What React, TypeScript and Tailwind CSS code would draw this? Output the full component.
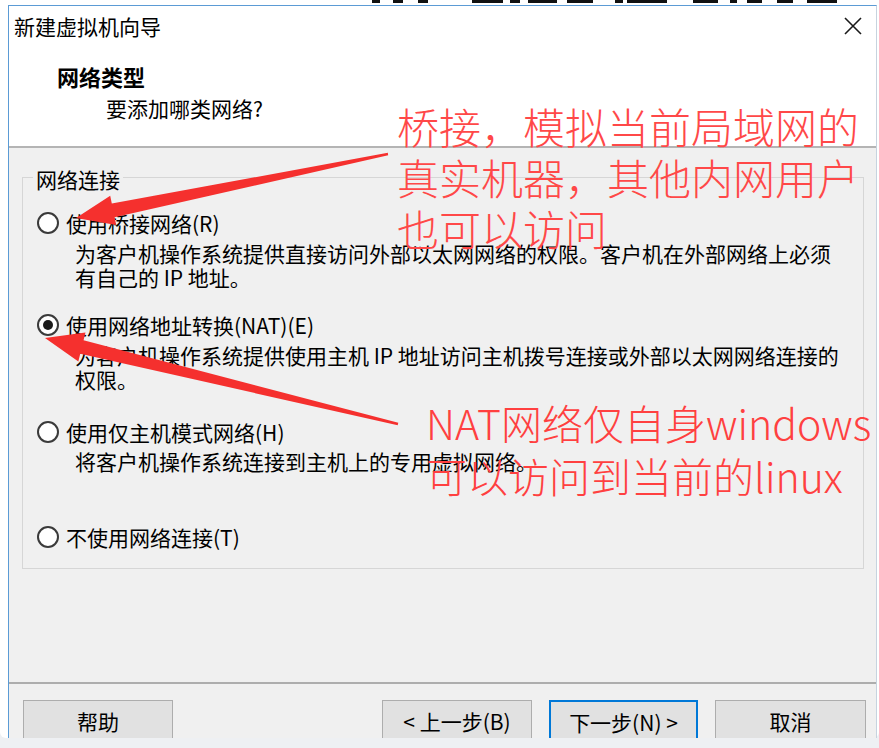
import React from "react";

function Radio({ checked }: { checked?: boolean }) {
  return (
    <span className="w-[22px] h-[22px] rounded-full border-2 border-[#3a3a3a] bg-white flex items-center justify-center shrink-0">
      {checked && <span className="w-[10px] h-[10px] rounded-full bg-[#1a1a1a]" />}
    </span>
  );
}

function Btn({ children, w, ml, primary }: { children: React.ReactNode; w: string; ml: string; primary?: boolean }) {
  return (
    <div
      className={
        "h-[44px] shrink-0 flex justify-center pt-[8px] leading-[24px] bg-[#e1e1e1] " +
        w +
        " " +
        ml +
        " " +
        (primary ? "border-2 border-[#0078d7] pt-[7px]" : "border border-[#adadad]")
      }
    >
      <span className="whitespace-nowrap">{children}</span>
    </div>
  );
}

export default function App() {
  const bars: [number, number][] = [
    [372, 8], [393, 10], [418, 10], [472, 31], [510, 10], [528, 29], [567, 26], [615, 8], [627, 40], [693, 25], [730, 7], [747, 15], [777, 16], [807, 30],
  ];
  return (
    <div className="w-[879px] h-[748px] bg-[#eef0f3] relative overflow-hidden font-['Noto_Sans_CJK_SC',sans-serif] text-[21px] leading-[24px] text-black">
      <div className="h-[738px] bg-white rounded-b-[6px] flex flex-col">
        <svg width="879" height="5" className="block shrink-0">
          {bars.map(([x, w], i) => (
            <rect key={i} x={x} y={0} width={w} height={3} fill="#111" />
          ))}
        </svg>
        <div className="ml-[8px] w-[869px] h-[733px] border-t border-l border-r border-t-[#5b9bd5] border-l-[#5b9bd5] border-r-[#c7d3df] overflow-hidden flex flex-col">
          {/* header */}
          <div className="h-[142px] shrink-0 bg-white border-b-2 border-[#b4b4b4] flex flex-col">
            <div className="mt-[8px] h-[24px] pl-[5px] pr-[14px] flex items-center justify-between">
              <span>新建虚拟机向导</span>
              <svg width="18" height="18" viewBox="0 0 18 18">
                <path d="M1 1 L17 17 M17 1 L1 17" stroke="#1a1a1a" strokeWidth="1.6" />
              </svg>
            </div>
            <div className="mt-[26px] pl-[48px] text-[22px] font-bold">网络类型</div>
            <div className="mt-[8px] pl-[97px]">要添加哪类网络?</div>
          </div>
          {/* body */}
          <div className="h-[536px] shrink-0 bg-[#f0f0f0] border-b-2 border-[#adadad] flex flex-col">
            <div className="mt-[29px] ml-[13px] w-[842px] h-[392px] border border-[#d6d6d6] flex flex-col">
              <div className="-mt-[11px] ml-[10px] px-[3px] w-fit bg-[#f0f0f0]">网络连接</div>
              <div className="mt-[20px] h-[24px] pl-[14px] flex items-center gap-[7px]">
                <Radio />
                <span>使用桥接网络(R)</span>
              </div>
              <div className="mt-[6px] pl-[52px] whitespace-nowrap">
                <div>为客户机操作系统提供直接访问外部以太网网络的权限。客户机在外部网络上必须</div>
                <div>有自己的 IP 地址。</div>
              </div>
              <div className="mt-[24px] h-[24px] pl-[14px] flex items-center gap-[7px]">
                <Radio checked />
                <span>使用网络地址转换(NAT)(E)</span>
              </div>
              <div className="mt-[6px] pl-[52px] whitespace-nowrap">
                <div>为客户机操作系统提供使用主机 IP 地址访问主机拨号连接或外部以太网网络连接的</div>
                <div>权限。</div>
              </div>
              <div className="mt-[29px] h-[24px] pl-[14px] flex items-center gap-[7px]">
                <Radio />
                <span>使用仅主机模式网络(H)</span>
              </div>
              <div className="mt-[5px] pl-[52px] whitespace-nowrap">
                <div>将客户机操作系统连接到主机上的专用虚拟网络。</div>
              </div>
              <div className="mt-[52px] h-[24px] pl-[14px] flex items-center gap-[7px]">
                <Radio />
                <span>不使用网络连接(T)</span>
              </div>
            </div>
          </div>
          {/* footer */}
          <div className="flex-1 bg-[#f0f0f0] pt-[16px] flex items-start">
            <Btn w="w-[150px]" ml="ml-[14px]">帮助</Btn>
            <Btn w="w-[150px]" ml="ml-[209px]">&lt; 上一步(B)</Btn>
            <Btn w="w-[149px]" ml="ml-[17px]" primary>下一步(N) &gt;</Btn>
            <Btn w="w-[151px]" ml="ml-[17px]">取消</Btn>
          </div>
        </div>
      </div>

      {/* annotation arrows */}
      <svg className="absolute left-0 top-0 pointer-events-none" width="879" height="748">
        <polygon
          points="76,218 110.2,195.7 111.8,203.5 387.8,152.8 388.2,155.2 114.6,217.3 116.2,225.1"
          fill="#f5302e"
        />
        <polygon
          points="45,338 85.45,332.4 83.56,340.2 398.3,422.8 397.7,425.2 80.24,353.8 78.35,361.6"
          fill="#f5302e"
        />
      </svg>

      {/* annotation texts */}
      <div className="absolute left-[397px] top-[100px] text-[42px] leading-[51px] font-light text-[#ff4848] whitespace-nowrap">
        <div>桥接，模拟当前局域网的</div>
        <div>真实机器，其他内网用户</div>
        <div>也可以访问</div>
      </div>
      <div className="absolute left-[426px] top-[396px] text-[41px] leading-[53px] font-light text-[#ff4040] whitespace-nowrap">
        <div>NAT网络仅自身windows</div>
        <div>可以访问到当前的linux</div>
      </div>
    </div>
  );
}
